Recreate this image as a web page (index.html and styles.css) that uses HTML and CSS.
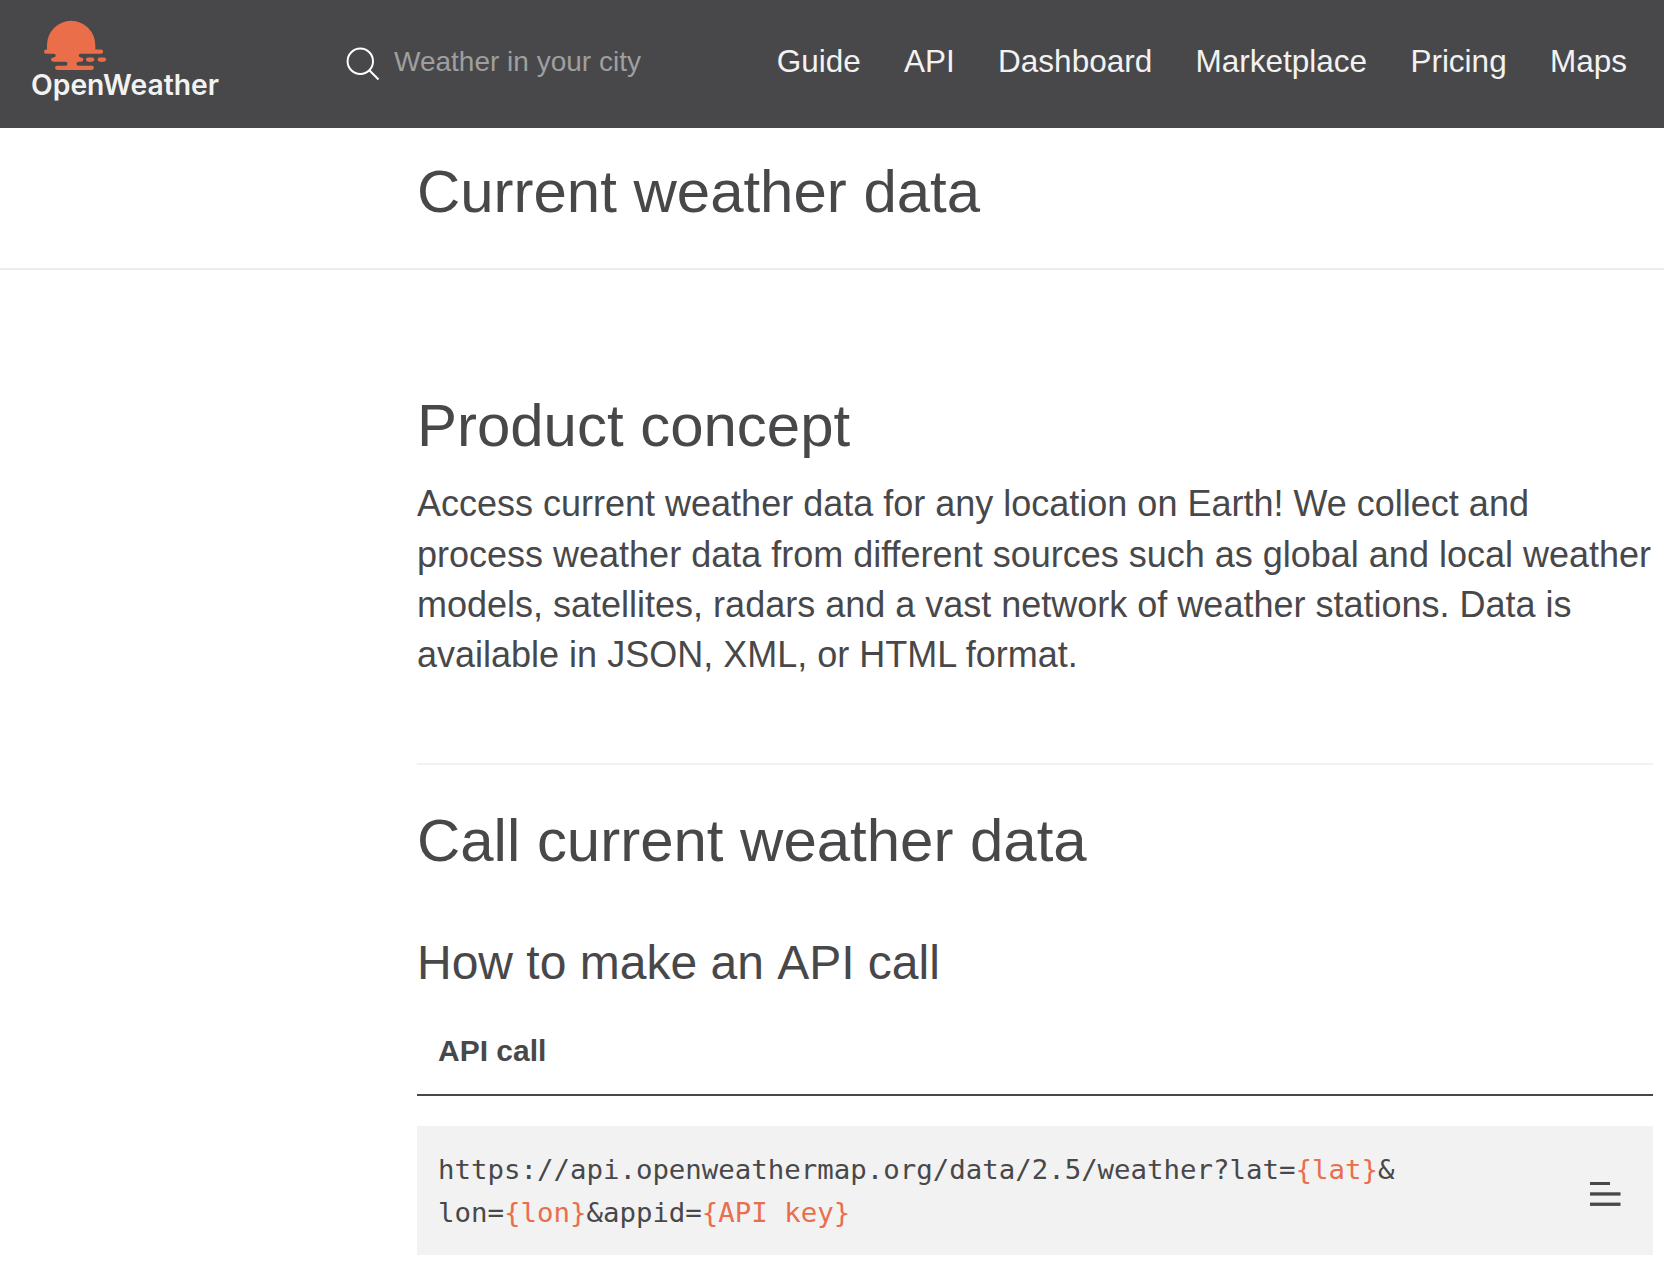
FILE: index.html
```html
<!DOCTYPE html>
<html lang="en">
<head>
<meta charset="utf-8">
<title>Current weather data - OpenWeather</title>
<link rel="stylesheet" href="styles.css">
</head>
<body>
<header class="topbar">
  <a class="logo">
    <svg width="200" height="90" viewBox="20 16 200 90" aria-label="OpenWeather">
      <g fill="#eb6e4b">
        <path d="M47 50V45a24 24 0 0 1 48.300 0v4.500h5.700a2.150 2.150 0 0 1 0 4.300H80.500a1.800 1.800 0 0 0 0 3.600h.700a2.150 2.150 0 0 1 0 4.300H78.500a2 2 0 0 0 0 4h13.300a2.150 2.150 0 0 1 0 4.300H57.200a2.150 2.150 0 0 1 0-4.300h8.300a2 2 0 0 0 0-4H53.200a2.150 2.150 0 0 1 0-4.300h.700a1.800 1.800 0 0 0 0-3.600H46.200a2.150 2.150 0 0 1 0-4.300z"/>
        <rect x="86" y="57.400" width="8.300" height="4.300" rx="2.100"/>
        <rect x="97.700" y="57.400" width="8.400" height="4.300" rx="2.100"/>
      </g>
      <text class="wordmark" x="31" y="94.700" textLength="188" lengthAdjust="spacingAndGlyphs">OpenWeather</text>
    </svg>
  </a>
  <div class="search">
    <svg width="34" height="34" viewBox="0 0 34 34" fill="none" stroke="#fff" stroke-width="2">
      <circle cx="14.300" cy="14.300" r="12.700"/>
      <path d="M23.300 23.300L32.500 32.500"/>
    </svg>
    <span>Weather in your city</span>
  </div>
  <nav class="nav">
    <a>Guide</a><a>API</a><a>Dashboard</a><a>Marketplace</a><a>Pricing</a><a>Maps</a>
  </nav>
</header>
<div class="page-title"><h1>Current weather data</h1></div>
<main class="content">
  <section class="concept">
    <h2>Product concept</h2>
    <p>Access current weather data for any location on Earth! We collect and<br>process weather data from different sources such as global and local weather<br>models, satellites, radars and a vast network of weather stations. Data is<br>available in JSON, XML, or HTML format.</p>
  </section>
  <section class="call">
    <h2>Call current weather data</h2>
    <h3>How to make an API call</h3>
    <h4>API call</h4>
    <div class="code">
      <code>https://api.openweathermap.org/data/2.5/weather?lat=<b>{lat}</b>&amp;<br>lon=<b>{lon}</b>&amp;appid=<b>{API key}</b></code>
      <svg width="31" height="26" viewBox="0 0 31 26" fill="#48484a">
        <rect y="1" width="20" height="3"/>
        <rect y="11.300" width="30.500" height="3.300"/>
        <rect y="21.600" width="30.500" height="3.300"/>
      </svg>
    </div>
  </section>
</main>
</body>
</html>
```
FILE: styles.css
```css
* { box-sizing: border-box; }
body {
  margin: 0;
  min-height: 1267px;
  background: #fff;
  color: #48484a;
  font-family: "Liberation Sans", Arial, sans-serif;
}
h1, h2, h3, h4, p { margin: 0; font-weight: 400; }
h1, h2 { font-size: 59.950px; line-height: 70px; }
.topbar {
  display: flex;
  align-items: flex-start;
  height: 128px;
  background: #48484a;
  white-space: nowrap;
}
.logo { margin: 16px 0 0 20px; height: 90px; }
.logo svg, .search svg, .code svg { display: block; flex: none; }
.wordmark { font: 600 28.500px Inter, sans-serif; fill: #f2f2f2; }
.search {
  display: flex;
  gap: 14px;
  margin: 44px 0 0 126px;
  padding-top: 3px;
  height: 40px;
  color: #9f9f9f;
  font-size: 28px;
}
.search span { line-height: 32px; margin-top: -1px; }
.nav {
  display: flex;
  gap: 43.300px;
  margin: 42px 37px 0 auto;
  color: #f2f2f2;
  font-size: 31.500px;
  line-height: 38px;
}
.page-title {
  height: 142px;
  padding: 29px 0 0 417px;
  border-bottom: 2px solid #ececed;
}
.content { width: 1236px; margin-left: 417px; }
.concept {
  height: 495px;
  padding-top: 121px;
  border-bottom: 2px solid #f2f2f2;
}
.concept p {
  margin-top: 18.200px;
  font-size: 36px;
  line-height: 50.400px;
  white-space: nowrap;
}
.call { padding-top: 41px; }
.call h3 {
  margin-top: 59px;
  font-size: 48px;
  line-height: 56px;
  font-kerning: none;
}
.call h4 {
  height: 74px;
  margin-top: 31px;
  padding: 11px 21px 0;
  border-bottom: 2px solid #48484a;
  font-size: 30px;
  font-weight: 700;
  line-height: 36px;
}
.code {
  display: flex;
  justify-content: space-between;
  align-items: center;
  height: 129px;
  margin-top: 30px;
  padding: 0 32px 0 21px;
  background: #f2f2f2;
}
.code svg { margin-top: 6px; }
.code code {
  font: 27.400px/43px "DejaVu Sans Mono", monospace;
  white-space: pre;
}
.code b { color: #e96e50; font-weight: 400; }
```
